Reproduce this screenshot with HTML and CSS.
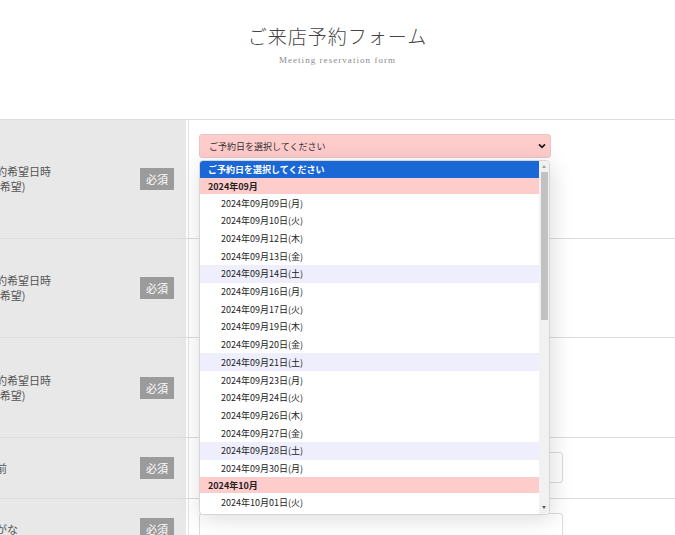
FILE: index.html
```html
<!DOCTYPE html>
<html lang="ja">
<head>
<meta charset="utf-8">
<title>ご来店予約フォーム</title>
<link rel="stylesheet" href="styles.css">
</head>
<body>
<header class="page-head">
  <h1 class="title">ご来店予約フォーム</h1>
  <p class="subtitle">Meeting reservation form</p>
</header>

<div class="form">
  <div class="row row-first">
    <div class="label-cell">
      <div class="label-text">ご予約希望日時<br>(第１希望)</div>
      <span class="badge">必須</span>
    </div>
    <div class="field-cell">
      <div class="select-wrap">
        <div class="select select-pink">
          <span>ご予約日を選択してください</span>
          <svg class="chev" width="8" height="6" viewBox="0 0 8 6"><path d="M1 1.3 L4 4.3 L7 1.3" fill="none" stroke="#1a1a1a" stroke-width="1.7"/></svg>
        </div>
        <div class="dropdown">
          <div class="opt-list">
            <div class="opt opt-current">ご予約日を選択してください</div>
            <div class="group">2024年09月</div>
            <div class="opt">2024年09月09日(月)</div>
            <div class="opt">2024年09月10日(火)</div>
            <div class="opt">2024年09月12日(木)</div>
            <div class="opt">2024年09月13日(金)</div>
            <div class="opt opt-sat">2024年09月14日(土)</div>
            <div class="opt">2024年09月16日(月)</div>
            <div class="opt">2024年09月17日(火)</div>
            <div class="opt">2024年09月19日(木)</div>
            <div class="opt">2024年09月20日(金)</div>
            <div class="opt opt-sat">2024年09月21日(土)</div>
            <div class="opt">2024年09月23日(月)</div>
            <div class="opt">2024年09月24日(火)</div>
            <div class="opt">2024年09月26日(木)</div>
            <div class="opt">2024年09月27日(金)</div>
            <div class="opt opt-sat">2024年09月28日(土)</div>
            <div class="opt">2024年09月30日(月)</div>
            <div class="group">2024年10月</div>
            <div class="opt">2024年10月01日(火)</div>
          </div>
          <div class="scrollbar">
            <span class="arrow arrow-up"></span>
            <span class="thumb"></span>
            <span class="arrow arrow-down"></span>
          </div>
        </div>
      </div>
      <p class="note">※ご希望の日時が選択できない場合はお電話ください</p>
    </div>
  </div>

  <div class="row row-second">
    <div class="label-cell">
      <div class="label-text">ご予約希望日時<br>(第２希望)</div>
      <span class="badge">必須</span>
    </div>
    <div class="field-cell">
      <div class="select select-narrow"></div>
    </div>
  </div>

  <div class="row row-third">
    <div class="label-cell">
      <div class="label-text">ご予約希望日時<br>(第３希望)</div>
      <span class="badge">必須</span>
    </div>
    <div class="field-cell">
      <div class="select select-narrow"></div>
    </div>
  </div>

  <div class="row row-short">
    <div class="label-cell">
      <div class="label-text">お名前</div>
      <span class="badge">必須</span>
    </div>
    <div class="field-cell">
      <div class="input"></div>
    </div>
  </div>

  <div class="row row-short">
    <div class="label-cell">
      <div class="label-text">ふりがな</div>
      <span class="badge">必須</span>
    </div>
    <div class="field-cell">
      <div class="input"></div>
    </div>
  </div>
</div>
</body>
</html>
```

FILE: styles.css
```css
* {
  box-sizing: border-box;
  margin: 0;
  padding: 0;
}

html,
body {
  width: 675px;
  height: 535px;
  overflow: hidden;
  background: #fff;
}

body {
  font-family: "Noto Sans CJK JP", "Noto Sans", sans-serif;
  color: #333;
}

/* header */
.page-head {
  height: 119px;
  padding-top: 24px;
  text-align: center;
}

.title {
  font-size: 19px;
  font-weight: 300;
  line-height: 24px;
  letter-spacing: 1px;
  color: #444;
}

.subtitle {
  margin-top: 6px;
  font-family: "Liberation Serif", serif;
  font-size: 9px;
  line-height: 12px;
  letter-spacing: 1.05px;
  color: #8a8a8a;
}

/* form table */
.form {
  border-top: 1px solid #dcdcdc;
}

.row {
  display: grid;
  grid-template-columns: 188px 1fr;
  border-bottom: 1px solid #dcdcdc;
}

.row-first { height: 119px; }
.row-second { height: 99px; }
.row-third { height: 100px; }
.row-short { height: 61px; }

.label-cell {
  display: flex;
  align-items: center;
  justify-content: space-between;
  background: #e8e8e8;
  border-right: 2px solid #fff;
  padding-right: 12px;
}

.label-text {
  margin-left: -26px;
  font-size: 11px;
  line-height: 15px;
  color: #555;
  white-space: nowrap;
}

.badge {
  display: flex;
  align-items: center;
  justify-content: center;
  width: 34px;
  height: 22px;
  background: #9b9b9b;
  color: #fff;
  font-size: 11px;
}

.field-cell {
  border-left: 1px solid #e2e2e2;
  padding: 14px 0 0 10px;
}

/* select */
.select-wrap {
  position: relative;
  width: 352px;
}

.select {
  display: flex;
  align-items: center;
  justify-content: space-between;
  width: 352px;
  height: 24px;
  padding: 0 4px 0 9px;
  border: 1px solid #dcdcdc;
  border-radius: 3px;
  background: #fff;
  font-size: 9px;
  color: #333;
}

.select-narrow {
  width: 345px;
}

.select-pink {
  background: #ffcccc;
  border-color: #e9c6c6;
}

.chev {
  display: block;
}

.note {
  margin: 12px 0 0 -1px;
  font-size: 11px;
  line-height: 16px;
  color: #e59512;
}

.input {
  width: 364px;
  height: 31px;
  border: 1px solid #dcdcdc;
  border-radius: 3px;
  background: #fff;
}

/* open dropdown list */
.dropdown {
  position: absolute;
  top: 26px;
  left: 0;
  width: 351px;
  height: 355px;
  display: flex;
  background: #fff;
  border: 1px solid #d6d6d6;
  border-radius: 4px;
  box-shadow: 2px 4px 22px rgba(0, 0, 0, 0.14);
  overflow: hidden;
  z-index: 10;
}

.opt-list {
  flex: 1;
  overflow: hidden;
  font-size: 9px;
  color: #222;
}

.opt {
  display: flex;
  align-items: center;
  height: 17.7px;
  padding-left: 21px;
  white-space: nowrap;
}

.opt-current {
  height: 17.3px;
  padding-left: 8px;
  background: #1a68d6;
  color: #fff;
  font-weight: 700;
}

.opt-sat {
  background: #eeeefc;
}

.group {
  display: flex;
  align-items: center;
  height: 16px;
  padding-left: 8px;
  background: #ffcccc;
  font-weight: 700;
  color: #222;
}

.scrollbar {
  position: relative;
  width: 10px;
  background: #f1f1f1;
}

.thumb {
  position: absolute;
  left: 1.5px;
  right: 1.5px;
  top: 10.5px;
  height: 148px;
  background: #c1c1c1;
}

.arrow {
  position: absolute;
  left: 2.5px;
  width: 0;
  height: 0;
  border-left: 2.5px solid transparent;
  border-right: 2.5px solid transparent;
}

.arrow-up {
  top: 4px;
  border-bottom: 3px solid #a3a3a3;
}

.arrow-down {
  bottom: 5px;
  border-top: 3px solid #606060;
}
```
